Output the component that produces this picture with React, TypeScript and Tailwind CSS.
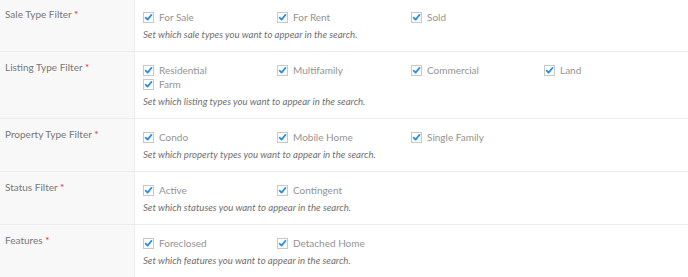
import React from "react";

type Row = { label: string; options: string[]; desc: string };

const rows: Row[] = [
  { label: "Sale Type Filter", options: ["For Sale", "For Rent", "Sold"], desc: "Set which sale types you want to appear in the search." },
  { label: "Listing Type Filter", options: ["Residential", "Multifamily", "Commercial", "Land", "Farm"], desc: "Set which listing types you want to appear in the search." },
  { label: "Property Type Filter", options: ["Condo", "Mobile Home", "Single Family"], desc: "Set which property types you want to appear in the search." },
  { label: "Status Filter", options: ["Active", "Contingent"], desc: "Set which statuses you want to appear in the search." },
  { label: "Features", options: ["Foreclosed", "Detached Home"], desc: "Set which features you want to appear in the search." },
];

function Check() {
  return (
    <span className="inline-flex h-[11px] w-[11px] shrink-0 items-center justify-center border border-[#c8c8c8] bg-white">
      <svg width="9" height="9" viewBox="0 0 10 10">
        <path d="M1.8 5.2 L4 7.4 L8.4 2" fill="none" stroke="#1e8cf0" strokeWidth="1.9" strokeLinecap="round" strokeLinejoin="round" />
      </svg>
    </span>
  );
}

export default function App() {
  return (
    <div className="w-[688px] h-[277px] overflow-hidden bg-white" style={{ fontFamily: "Lato, 'Noto Sans', sans-serif" }}>
      {rows.map((r, i) => (
        <div key={r.label} className={`flex border-b border-[#ededed] ${i === 0 ? "-mt-[1px]" : ""}`}>
          <div className="w-[135px] shrink-0 bg-[#f8f8f8] border-r border-[#ececec] pl-[5px] pt-[8px] text-[10px] leading-[14px] text-[#777777]">
            {r.label} <span className="text-[#e4262b]">*</span>
          </div>
          <div className="flex-1 pl-[8px] pt-[11px] pb-[9px]">
            <div className="grid grid-cols-[134px_134px_133px_134px]">
              {r.options.map((o) => (
                <div key={o} className="flex h-[14px] items-center gap-[5px] text-[10px] text-[#939393]">
                  <Check />
                  <span className="leading-[14px]">{o}</span>
                </div>
              ))}
            </div>
            <div className="mt-[4px] text-[9.6px] italic leading-[14px] text-[#6f6f6f]">{r.desc}</div>
          </div>
        </div>
      ))}
    </div>
  );
}
